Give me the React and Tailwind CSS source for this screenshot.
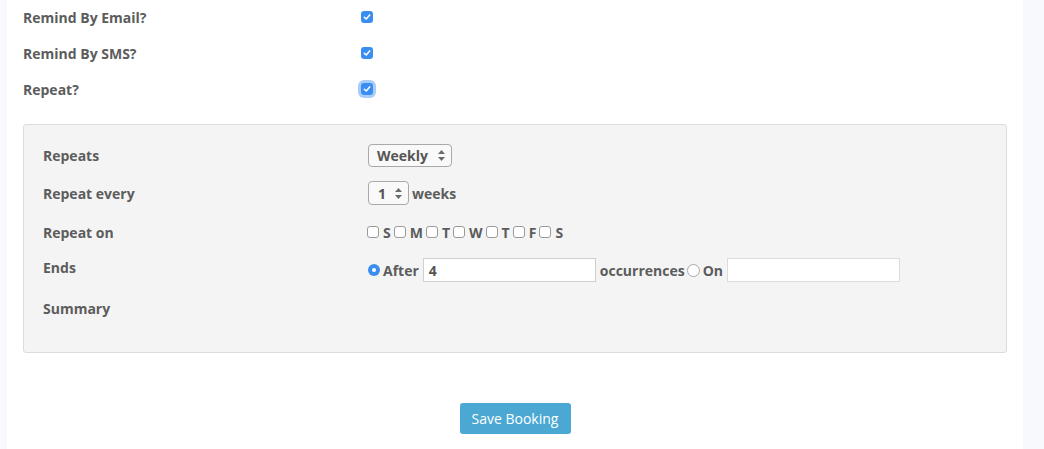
import React from 'react';

const CheckOn = ({ focus }) => (
  <span
    className={`flex items-center justify-center w-[12px] h-[12px] rounded-[3px] bg-[#3a8ef0] ${
      focus ? 'ring-[3px] ring-[#a9cdf8]' : ''
    }`}
  >
    <svg width="8" height="8" viewBox="0 0 8 8" fill="none">
      <path d="M1.3 4.2 L3.2 6 L6.7 1.9" stroke="white" strokeWidth="1.5" strokeLinecap="round" strokeLinejoin="round" />
    </svg>
  </span>
);

const CheckOff = () => (
  <span className="inline-block w-[12px] h-[12px] rounded-[3px] border border-[#9a9a9a] bg-white" />
);

const Arrows = () => (
  <svg width="7" height="11" viewBox="0 0 7 11" fill="#6b6b6b">
    <path d="M3.5 0 L7 4 L0 4 Z" />
    <path d="M0 7 L7 7 L3.5 11 Z" />
  </svg>
);

const App = () => {
  const days = ['S', 'M', 'T', 'W', 'T', 'F', 'S'];

  return (
    <div
      className="flex w-[1044px] h-[449px] bg-white text-[#5c5c5c] overflow-hidden"
      style={{ fontFamily: '"Open Sans", "Liberation Sans", sans-serif' }}
    >
      <div className="w-[7px] bg-[#f8f9fd]" />

      <div className="flex-1 flex flex-col px-[16px]">
        {/* Top options */}
        <div className="flex flex-col -mt-[1px]">
          {[
            { label: 'Remind By Email?', focus: false },
            { label: 'Remind By SMS?', focus: false },
            { label: 'Repeat?', focus: true },
          ].map((row) => (
            <div key={row.label} className="flex items-center h-[36px]">
              <div className="w-[338px] text-[14px] font-bold">{row.label}</div>
              <CheckOn focus={row.focus} />
            </div>
          ))}
        </div>

        {/* Repeat panel */}
        <div className="mt-[17px] h-[229px] border border-[#dcdcdc] rounded-[3px] bg-[#f4f4f4] px-[19px] pt-[18px] flex flex-col gap-[14px]">
          <div className="flex items-center h-[24px]">
            <div className="w-[325px] text-[14px] font-bold">Repeats</div>
            <div className="flex items-center justify-between w-[84px] h-[23px] border border-[#a9a9a9] rounded-[4px] bg-[#f9f9f9] pl-[8px] pr-[6px]">
              <span className="text-[14px] font-bold text-[#555]">Weekly</span>
              <Arrows />
            </div>
          </div>

          <div className="flex items-center h-[24px]">
            <div className="w-[325px] text-[14px] font-bold">Repeat every</div>
            <div className="flex items-center justify-between w-[41px] h-[24px] border border-[#a9a9a9] rounded-[4px] bg-[#f9f9f9] pl-[9px] pr-[6px]">
              <span className="text-[14px] font-bold text-[#555]">1</span>
              <Arrows />
            </div>
            <span className="ml-[3px] text-[14px] font-bold">weeks</span>
          </div>

          <div className="flex items-center h-[24px] mt-[1px]">
            <div className="w-[324px] text-[14px] font-bold">Repeat on</div>
            <div className="flex items-center">
              {days.map((d, i) => (
                <div key={i} className="flex items-center mr-[3px]">
                  <CheckOff />
                  <span className="ml-[4px] text-[14px] font-bold">{d}</span>
                </div>
              ))}
            </div>
          </div>

          <div className="flex items-center h-[24px]">
            <div className="w-[325px] text-[14px] font-bold mb-[6px]">Ends</div>
            <span className="flex items-center justify-center w-[12px] h-[12px] rounded-full bg-[#3a8ef0]">
              <span className="w-[4px] h-[4px] rounded-full bg-white" />
            </span>
            <span className="ml-[3px] text-[14px] font-bold">After</span>
            <div className="ml-[4px] w-[173px] h-[24px] border border-[#cfcfcf] bg-white flex items-center pl-[5px] text-[14px] font-bold text-[#555]">
              4
            </div>
            <span className="ml-[4px] text-[14px] font-bold">occurrences</span>
            <span className="ml-[2px] w-[13px] h-[13px] rounded-full border border-[#a9a9a9] bg-white" />
            <span className="ml-[3px] text-[14px] font-bold">On</span>
            <div className="ml-[4px] w-[173px] h-[24px] border border-[#dcdcdc] bg-white" />
          </div>

          <div className="flex items-center h-[24px]">
            <div className="w-[325px] text-[14px] font-bold">Summary</div>
          </div>
        </div>

        {/* Save */}
        <div className="flex justify-center mt-[50px]">
          <button className="w-[111px] h-[31px] rounded-[3px] bg-[#4aa8d3] text-white text-[14px]">
            Save Booking
          </button>
        </div>
      </div>

      <div className="w-[21px] bg-[#f8f9fd]" />
    </div>
  );
};

export default App;
